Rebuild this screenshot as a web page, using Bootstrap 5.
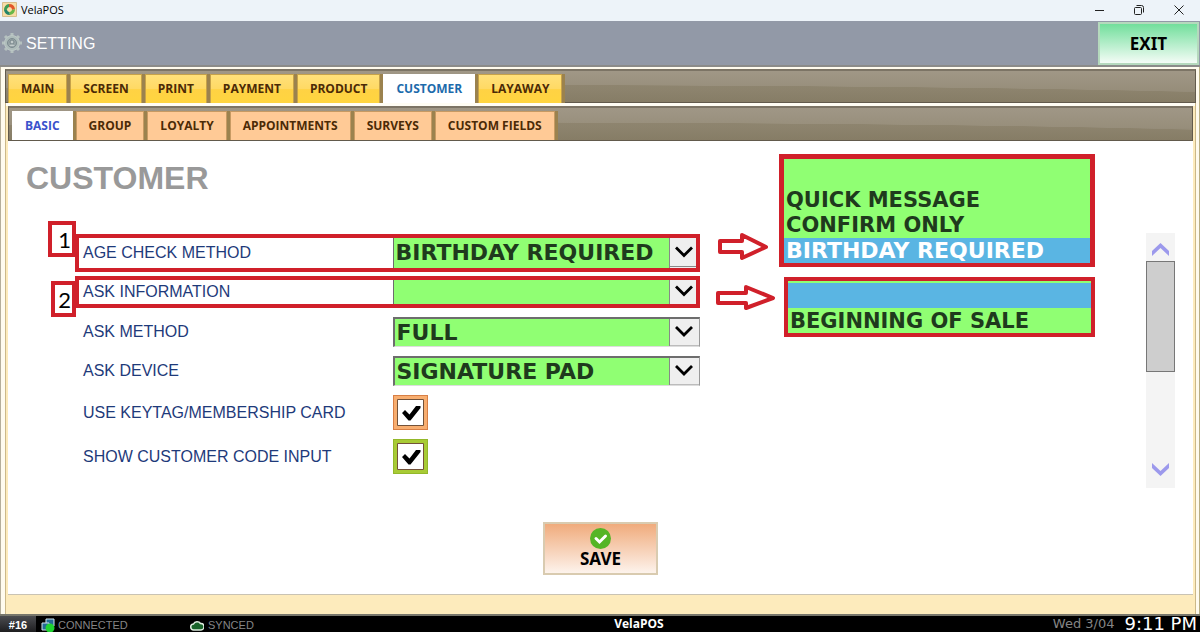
<!DOCTYPE html>
<html lang="en">
<head>
<meta charset="utf-8">
<meta name="viewport" content="width=device-width, initial-scale=1">
<title>VelaPOS</title>
<link href="https://cdn.jsdelivr.net/npm/bootstrap@5.3.0/dist/css/bootstrap.min.css" rel="stylesheet">
<script src="https://cdn.jsdelivr.net/npm/bootstrap@5.3.0/dist/js/bootstrap.bundle.min.js" defer></script>
<style>
:root { --red: #d0202a; --lime: #90ff73; --sky: #5ab5e3; }
body { font-family: "Liberation Sans", Arial, sans-serif; color: #000; background: #fdf9ea; }
svg { display: block; flex: none; }
button { font-family: inherit; }

.titlebar { height: 21px; background: #edf3f9; padding: 0 15px 2px 2px; font: 11px/19px "Open Sans", sans-serif; }
.titlebar button { padding: 0; border: 0; background: none; }
.window-tools { gap: 28px; }

.headbar { height: 46px; padding-left: 2px; background: #9299a7; border-bottom: 2px solid #8b8b89; }
.headbar h1 { font-size: 16px; line-height: 20px; padding-top: 2px; }
.btn-exit { width: 101px; height: 43px; margin: 1px 1px 0 0; padding: 0; border: 2px solid #b5d9bd; border-radius: 0; color: #000;
  background: linear-gradient(#72df9c, #f4fcf6); font: bold 17px/20px "Noto Sans", sans-serif; }

.frame { padding: 2px 3px 0 4px; border-left: 1px solid #b5ae9a; border-right: 1px solid #b9ae82; background: #fffbee; }
.tab-inner { padding: 3px 2px 0; border: solid #cbb889; border-width: 0 1px; background: linear-gradient(#fffdf4 3px, #fdebbc 3px); }
.strip { height: 34px; padding: 3px 2px 0; border: 1px solid #625a4c; border-top: 2px solid #7c7465;
  background: radial-gradient(ellipse 75% 55% at 40% 100%, rgba(128,118,93,.45) 0 98%, transparent 100%), linear-gradient(#a09786, #978e7b 60%, #8b826d); }
.strip ul { gap: 3px; }
.strip .nav-link { height: 29px; padding: 0 12px; border: 1px solid #c6a24a; border-bottom: 0; border-radius: 0;
  font: bold 12px/28px "Open Sans", sans-serif; color: #4b2a06; background: linear-gradient(#ffe07a, #ffd964 50%, #ffd244 52%, #ffd53f); }
.strip li { box-shadow: 3px 0 0 #9b824e; }
.strip-sub { height: 35px; padding-left: 3px; }
.strip-sub .nav-link { background: #ffca96; border-color: #c79a63; }
.strip .nav-link.active { background: #fff; color: #1c6bab; border-color: #fff; }
.strip-sub .nav-link.active { color: #3a52cc; }

.panel { background: #fff; border-bottom: 1px solid #c9c3b3; padding-bottom: 17px; }
.panel-grid { display: grid; grid-template-columns: minmax(0, 692fr) minmax(0, 79fr) minmax(0, 316fr) minmax(0, 98fr); }
.panel h2 { margin: 0; padding: 18px 0 0 18px; font-size: 32px; line-height: 38px; color: #999; }
.fields { margin: 37px 0 0 67px; gap: 9px; }
.field { display: grid; grid-template-columns: minmax(0, 317fr) minmax(0, 307fr); align-items: center; position: relative; }
.field label { padding-left: 8px; font-size: 16px; line-height: 20px; color: #1e3a7a; }
.marked { grid-template-columns: minmax(0, 313fr) minmax(0, 303fr); border: 4px solid var(--red); }
.marked label { padding-left: 4px; }
.marked + .marked { margin-top: -5px; }
.tag { position: absolute; right: 100%; width: 28px; height: 36px; top: -17px; margin-right: 3px; border: 4px solid var(--red); background: #fff;
  font: 22px/30px Lato, sans-serif; text-align: right; padding-right: 1px; }
.tag-low { width: 25px; top: 1px; }
.pick { appearance: none; width: 100%; height: 30px; padding: 0 32px 0 2px; border: solid #6d6d6d; border-width: 2px 1px 1px 2px; border-right-color: #999; border-bottom-color: #ddd; border-radius: 0;
  color: #1f3a1d; font: bold 22px/26px "DejaVu Sans", Verdana, sans-serif;
  background: var(--lime) url("data:image/svg+xml,%3Csvg xmlns='http://www.w3.org/2000/svg' width='30' height='30'%3E%3Cpath d='M0 0h30v30H0z' fill='%23efefef'/%3E%3Cpath d='M.5 0v30M0 28.500h30' stroke='%23888'/%3E%3Cpath d='M7 9.500l8 8 8-8' fill='none' stroke='%23000' stroke-width='2.800'/%3E%3C/svg%3E") right center no-repeat; }
.marked .pick { border-width: 0 0 0 1px; background-position: right -3px center; }
.pick-short { height: 24px; }
.tick { appearance: none; display: block; width: 35px; height: 35px; margin: 0; border: 1px solid #d87f45;
  background: url("data:image/svg+xml,%3Csvg xmlns='http://www.w3.org/2000/svg' viewBox='0 0 27 27'%3E%3Cpath d='M.5.500h26v26H.500z' fill='%23fff' stroke='%23735239'/%3E%3Cpath d='M5 14l3-3 4.500 4.500L19 7h4.500v2L13.500 21.500h-2z' fill='%23000'/%3E%3C/svg%3E") center/27px no-repeat #f8ae70; }
.tick-green { background-color: #a8cb35; border-color: #93b82a; }

.arrows { padding-top: 92px; }
.arrows svg:first-child { margin: 0 0 24px 17px; }
.arrows svg:last-child { margin-left: 15px; }
.lists { padding-top: 13px; gap: 10px; }
.lists ul { margin: 0; padding: 4px 0 0; list-style: none; border: 5px solid var(--red); border-bottom-width: 4px; background: var(--lime);
  font: bold 21px/25px "DejaVu Sans", Verdana, sans-serif; color: #1f3a1d; white-space: nowrap; }
.lists li { height: 25px; padding-left: 2px; }
.lists .chosen { background: var(--sky); color: #fff; font-size: 22px; }
.lists ul.list-b { margin-left: 5px; padding: 2px 0 0; border-width: 4px; }
.list-b li:last-child { line-height: 27px; }

.scroller { width: 29px; height: 255px; margin: 92px 18px 0 auto; background: #f4f4f4; }
.scroller button { height: 28px; padding: 0; border: 0; background: none; }
.thumb { height: 111px; margin-bottom: auto; background: #cecece; border: 1px solid #777; }

.btn-save { width: 115px; height: 53px; margin-top: 34px; padding: 4px 0 0; border: 2px solid #d9cbb0; border-radius: 0; color: #000;
  background: linear-gradient(#f0ab7c, #fdf3ec); font: bold 17px/20px "Noto Sans", sans-serif; }
.cream { height: 19px; }
.statusbar { height: 18px; background: #000; border-top: 2px solid #77766b; color: #858585; font-size: 11px; line-height: 18px; overflow: hidden; }
.status-left { flex: 616 1 0; }
.status-right { flex: 535 1 0; }
.station { width: 36px; background: linear-gradient(#4b4c50, #1e1e20); color: #fff; text-align: center; }
.net { margin-left: 5px; gap: 3px; width: 149px; }
.brand-name { font: bold 12px/16px "Open Sans", sans-serif; color: #fff; }
.status-right { font-family: "DejaVu Sans", Verdana, sans-serif; gap: 10px; padding-right: 3px; }
.status-right time { font-size: 13px; line-height: 16px; }
.status-right .hour { font-size: 18px; line-height: 16px; color: #fff; }
</style>
</head>
<body class="d-flex flex-column min-vh-100">

<div class="titlebar d-flex align-items-center">
  <svg width="15" height="15" viewBox="0 0 15 15" aria-hidden="true"><path d="M.5.500h14v14H.500z" fill="#f8dda6" stroke="#d6bd8d"/><path d="M7 2a5.500 5.500 0 0 0-5 6l3 1a3 3 0 0 1 3-4z" fill="#3d9b55"/><path d="M7 2a6 6 0 0 1 6 5l-3 1a3 3 0 0 0-3-3z" fill="#e3562a"/><path d="M13 7a6 6 0 0 1-5 6L7 10a3 3 0 0 0 3-2z" fill="#67b84a"/><path d="M2 8a6 6 0 0 0 6 5l-1-3a3 3 0 0 1-2-2z" fill="#22836a"/></svg>
  <span class="ms-1">VelaPOS</span>
  <div class="window-tools d-flex ms-auto">
    <button type="button" aria-label="Minimize"><svg width="12" height="12" viewBox="0 0 12 12"><path d="M2 6.500h9" stroke="#222"/></svg></button>
    <button type="button" aria-label="Restore"><svg width="12" height="12" viewBox="0 0 12 12" fill="none" stroke="#222"><rect x="1.500" y="3.500" width="7" height="7" rx="1"/><path d="M3.500 1.500h5q2 0 2 2v5"/></svg></button>
    <button type="button" aria-label="Close"><svg width="12" height="12" viewBox="0 0 12 12"><path d="M1.500 1.500l9 9m0-9l-9 9" stroke="#222"/></svg></button>
  </div>
</div>

<header class="headbar d-flex align-items-center">
  <svg width="20" height="20" viewBox="0 0 20 20" class="me-1" aria-hidden="true"><g stroke="#b5c1bf" stroke-width="3"><path d="M10 0v20M0 10h20M3 3l14 14M17 3L3 17"/></g><circle cx="10" cy="10" r="7.500" fill="#aebcba" stroke="#bdc8c6"/><circle cx="10" cy="10" r="4.500" fill="#98a5a7" stroke="#7d8b90"/><circle cx="10" cy="9" r="2" fill="#c3cccb" stroke="#77858a"/><path d="M7 13q3-3 6 0z" fill="#c3cccb"/></svg>
  <h1 class="text-white m-0">SETTING</h1>
  <button type="button" class="btn btn-exit ms-auto align-self-start">EXIT</button>
</header>

<main class="frame d-flex flex-column flex-grow-1">
  <nav class="strip" aria-label="Settings">
    <ul class="nav flex-nowrap">
      <li><a class="nav-link" href="#main">MAIN</a></li>
      <li><a class="nav-link" href="#screen">SCREEN</a></li>
      <li><a class="nav-link" href="#print">PRINT</a></li>
      <li><a class="nav-link" href="#payment">PAYMENT</a></li>
      <li><a class="nav-link" href="#product">PRODUCT</a></li>
      <li><a class="nav-link active" aria-current="page" href="#customer">CUSTOMER</a></li>
      <li><a class="nav-link" href="#layaway">LAYAWAY</a></li>
    </ul>
  </nav>
  <div class="tab-inner d-flex flex-column flex-grow-1">
    <nav class="strip strip-sub" aria-label="Customer settings">
      <ul class="nav flex-nowrap">
        <li><a class="nav-link active" aria-current="page" href="#basic">BASIC</a></li>
        <li><a class="nav-link" href="#group">GROUP</a></li>
        <li><a class="nav-link" href="#loyalty">LOYALTY</a></li>
        <li><a class="nav-link" href="#appointments">APPOINTMENTS</a></li>
        <li><a class="nav-link" href="#surveys">SURVEYS</a></li>
        <li><a class="nav-link" href="#fields">CUSTOM FIELDS</a></li>
      </ul>
    </nav>
    <form class="panel flex-grow-1" id="customer">
      <div class="panel-grid">
        <div>
          <h2 class="fw-bold">CUSTOMER</h2>
          <div class="fields d-flex flex-column" id="fields">
            <div class="field marked"><span class="tag">1</span>
              <label for="age">AGE CHECK METHOD</label>
              <select id="age" class="pick"><option></option><option>QUICK MESSAGE</option><option>CONFIRM ONLY</option><option selected>BIRTHDAY REQUIRED</option></select></div>
            <div class="field marked"><span class="tag tag-low">2</span>
              <label for="info">ASK INFORMATION</label>
              <select id="info" class="pick pick-short"><option selected></option><option>BEGINNING OF SALE</option></select></div>
            <div class="field">
              <label for="method">ASK METHOD</label>
              <select id="method" class="pick"><option>FULL</option></select></div>
            <div class="field">
              <label for="device">ASK DEVICE</label>
              <select id="device" class="pick"><option>SIGNATURE PAD</option></select></div>
            <div class="field">
              <label for="keytag">USE KEYTAG/MEMBERSHIP CARD</label>
              <input id="keytag" type="checkbox" class="tick" checked></div>
            <div class="field">
              <label for="code">SHOW CUSTOMER CODE INPUT</label>
              <input id="code" type="checkbox" class="tick tick-green" checked></div>
          </div>
        </div>
        <div class="arrows" aria-hidden="true">
          <svg width="52" height="28" viewBox="0 0 52 28"><path d="M3 8h22V2l24 12-24 11v-6H3z" fill="#fff" stroke="#d0202a" stroke-width="4" stroke-linejoin="round"/></svg>
          <svg width="62" height="26" viewBox="0 0 62 26"><path d="M3 8h28V2l27 11-27 10v-5H3z" fill="#fff" stroke="#d0202a" stroke-width="4" stroke-linejoin="round"/></svg>
        </div>
        <div class="lists d-flex flex-column">
          <ul role="listbox" aria-label="Age check method choices">
            <li role="option"></li><li role="option">QUICK MESSAGE</li><li role="option">CONFIRM ONLY</li><li role="option" class="chosen" aria-selected="true">BIRTHDAY REQUIRED</li>
          </ul>
          <ul class="list-b" role="listbox" aria-label="Ask information choices">
            <li role="option" class="chosen" aria-selected="true"></li><li role="option">BEGINNING OF SALE</li>
          </ul>
        </div>
        <div class="scroller d-flex flex-column">
          <button type="button" aria-label="Scroll up"><svg class="mx-auto mt-1" width="19" height="16" viewBox="0 0 19 16"><path d="M1 10l8.500-8L18 10v5L9.500 7 1 15z" fill="#9c99ec"/></svg></button>
          <div class="thumb"></div>
          <button type="button" aria-label="Scroll down"><svg class="mx-auto mb-2" width="19" height="16" viewBox="0 0 19 16"><path d="M1 1l8.500 8L18 1v5l-8.500 8L1 6z" fill="#9c99ec"/></svg></button>
        </div>
      </div>
      <button type="submit" class="btn btn-save d-flex flex-column align-items-center mx-auto">
        <svg width="21" height="21" viewBox="0 0 21 21" aria-hidden="true"><circle cx="10.500" cy="10.500" r="10.500" fill="#55b526"/><path d="M6 10.500l3.500 3.500 6-6" fill="none" stroke="#fff" stroke-width="3" stroke-linecap="round"/></svg>
        <span>SAVE</span>
      </button>
    </form>
    <div class="cream"></div>
  </div>
</main>

<footer class="statusbar d-flex">
  <div class="status-left d-flex">
    <strong class="station">#16</strong>
    <span class="net d-flex"><svg width="14" height="17" viewBox="0 0 14 17" aria-hidden="true"><path d="M5 3h8v7H5z" fill="#246a94" stroke="#cfe3ee"/><path d="M1 7h7v7H1z" fill="#246a94" stroke="#cfe3ee"/><circle cx="9" cy="12" r="4.500" fill="#1fd331"/></svg>CONNECTED</span>
    <span class="d-flex gap-1"><svg width="14" height="17" viewBox="0 0 14 17" aria-hidden="true"><path d="M4 14a3 3 0 0 1-.5-6 4 4 0 0 1 7-.5A3.200 3.200 0 0 1 11 14z" fill="#186329" stroke="#dcebdd" stroke-width="1.500"/></svg>SYNCED</span>
  </div>
  <span class="brand-name">VelaPOS</span>
  <div class="status-right d-flex justify-content-end"><time>Wed 3/04</time><time class="hour">9:11 PM</time></div>
</footer>
</body>
</html>
